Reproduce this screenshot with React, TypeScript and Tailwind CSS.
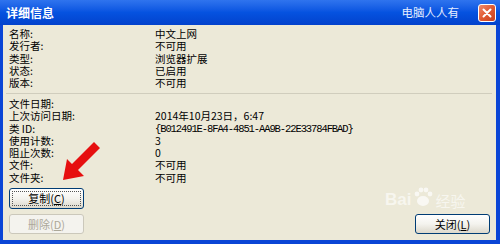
import React from 'react'

const font = { fontFamily: '"Noto Sans CJK SC", "Noto Sans", sans-serif' }

const groupA = [
  { label: '名称:', value: '中文上网' },
  { label: '发行者:', value: '不可用' },
  { label: '类型:', value: '浏览器扩展' },
  { label: '状态:', value: '已启用' },
  { label: '版本:', value: '不可用' },
]

const groupB = [
  { label: '文件日期:', value: '' },
  { label: '上次访问日期:', value: '2014年10月23日，6:47' },
  { label: '类 ID:', value: '{B012491E-8FA4-4851-AA9B-22E33784FBAD}', mono: true },
  { label: '使用计数:', value: '3' },
  { label: '阻止次数:', value: '0' },
  { label: '文件:', value: '不可用' },
  { label: '文件夹:', value: '不可用' },
]

type Row = { label: string; value: string; mono?: boolean }

function Rows({ rows }: { rows: Row[] }) {
  return (
    <div className="grid grid-cols-[146px_1fr] text-[10.5px] leading-[12.3px] text-black">
      {rows.map((r) => (
        <React.Fragment key={r.label}>
          <div className="whitespace-nowrap">{r.label}</div>
          <div
            className={
              r.mono
                ? 'whitespace-nowrap font-["Liberation_Mono",monospace] text-[10.5px] tracking-[-1.1px]'
                : 'whitespace-nowrap'
            }
          >
            {r.value}
          </div>
        </React.Fragment>
      ))}
    </div>
  )
}

function XpButton({
  children,
  focused,
  disabled,
  className,
}: {
  children: React.ReactNode
  focused?: boolean
  disabled?: boolean
  className?: string
}) {
  if (disabled) {
    return (
      <div
        className={`flex w-[75px] items-center justify-center rounded-[3px] border border-[#cbc8bb] bg-[#f4f3ee] text-[11px] text-[#aca899] ${className ?? ''}`}
      >
        {children}
      </div>
    )
  }
  return (
    <div
      className={`flex w-[75px] rounded-[3px] border border-[#003c74] bg-gradient-to-b from-white via-[#f4f3ee] to-[#dcd8cb] p-[2px] text-[11px] text-black ${className ?? ''}`}
    >
      <div
        className={`flex flex-1 items-center justify-center ${focused ? 'border border-dotted border-[#555]' : ''}`}
      >
        {children}
      </div>
    </div>
  )
}

export default function App() {
  return (
    <div className="relative flex h-[244px] w-[500px] flex-col overflow-hidden bg-[#0a45d6]" style={font}>
      {/* Title bar */}
      <div className="flex h-[25px] items-center bg-gradient-to-b from-[#2f74ee] via-[#0552e0] to-[#0342cc] pl-[6px] pr-[4px]">
        <span className="text-[12px] font-bold text-white">详细信息</span>
        <span className="ml-auto mr-[19px] text-[11.5px] text-[#e6eeff]">电脑人人有</span>
        <div className="flex h-[18px] w-[18px] items-center justify-center rounded-[3px] border border-white bg-gradient-to-br from-[#f08a6a] via-[#e05a32] to-[#c8401f]">
          <svg width="10" height="10" viewBox="0 0 10 10">
            <path d="M1.5 1.5 L8.5 8.5 M8.5 1.5 L1.5 8.5" stroke="white" strokeWidth="2" strokeLinecap="round" />
          </svg>
        </div>
      </div>

      {/* Body */}
      <div className="ml-[3px] mr-[4px] mb-[4px] flex flex-1 flex-col bg-[#ece9d8] pl-[6px] pr-[6px] pt-[3px]">
        <Rows rows={groupA} />
        <div className="mt-[4px] mr-[-2px] ml-[-3px] h-[1px] bg-[#d0cdbd]" />
        <div className="mt-[3.5px]">
          <Rows rows={groupB} />
        </div>
        <div className="mt-[4px] flex items-end justify-between">
          <div className="flex flex-col gap-[5px]">
            <XpButton focused className="h-[21px]">
              复制(<span className="underline">C</span>)
            </XpButton>
            <XpButton disabled className="h-[20px]">
              删除(<span className="underline">D</span>)
            </XpButton>
          </div>
          <XpButton className="h-[20px]">
            关闭(<span className="underline">L</span>)
          </XpButton>
        </div>
      </div>

      {/* Baidu watermark */}
      <div className="pointer-events-none absolute left-[385px] top-[186px] flex items-end text-white/60">
        <span className="text-[17px] font-bold leading-none" style={{ fontFamily: '"Liberation Sans", sans-serif' }}>
          Bai
        </span>
        <svg width="22" height="22" viewBox="0 0 22 22" className="mx-[1px] opacity-70">
          <ellipse cx="11" cy="15" rx="6" ry="5" fill="white" />
          <circle cx="5" cy="8" r="2.4" fill="white" />
          <circle cx="9" cy="4" r="2.4" fill="white" />
          <circle cx="14" cy="4" r="2.4" fill="white" />
          <circle cx="18" cy="8" r="2.4" fill="white" />
        </svg>
        <span className="text-[15px] leading-none">经验</span>
      </div>

      {/* Red arrow */}
      <svg className="pointer-events-none absolute left-0 top-0" width="500" height="244">
        <polygon
          points="100,148 94,142 72,164 67,159 63,180 84,176 78,170"
          fill="#e60f0f"
        />
      </svg>
    </div>
  )
}
